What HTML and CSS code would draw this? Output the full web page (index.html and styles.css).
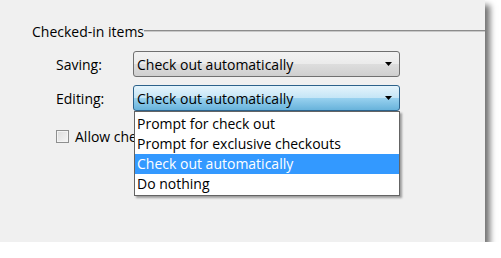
FILE: index.html
```html
<!DOCTYPE html>
<html lang="en">
<head>
  <meta charset="UTF-8">
  <title>Options - Checked-in items</title>
  <link rel="stylesheet" href="styles.css">
</head>
<body>
  <div class="window">
    <div class="group">
      <div class="group-head">
        <span class="group-title">Checked-in items</span>
        <span class="group-line"></span>
      </div>

      <div class="row">
        <span class="row-label">Saving:</span>
        <div class="combo">
          <span class="combo-text">Check out automatically</span>
          <svg class="combo-arrow" width="7" height="4" viewBox="0 0 7 4"><path d="M0 0H7L3.5 4Z" fill="#000"/></svg>
        </div>
      </div>

      <div class="row">
        <span class="row-label">Editing:</span>
        <div class="combo combo-open">
          <span class="combo-text">Check out automatically</span>
          <svg class="combo-arrow" width="7" height="4" viewBox="0 0 7 4"><path d="M0 0H7L3.5 4Z" fill="#000"/></svg>
          <ul class="combo-list">
            <li>Prompt for check out</li>
            <li>Prompt for exclusive checkouts</li>
            <li class="selected">Check out automatically</li>
            <li>Do nothing</li>
          </ul>
        </div>
      </div>

      <label class="check-row">
        <span class="checkbox"></span>
        <span class="check-text">Allow checked-in items to be edited</span>
      </label>
    </div>
  </div>
</body>
</html>
```

FILE: styles.css
```css
body {
  margin: 0;
  background-color: #FFFFFF;
  font-family: "Open Sans", "Noto Sans", sans-serif;
  font-size: 14px;
  color: #000000;
}

.window {
  width: 485px;
  height: 242px;
  background-color: #F0F0F0;
  box-shadow: 5px 5px 6px rgba(0, 0, 0, 0.55);
}

.group {
  padding: 22px 0 0 32px;
}

.group-head {
  display: flex;
  align-items: center;
  height: 18px;
}

.group-line {
  flex: 1;
  height: 0;
  border-top: 1px solid #8C8C8C;
  border-bottom: 1px solid #C8C8C8;
}

.row {
  display: flex;
  align-items: center;
  margin-top: 8px;
  padding-left: 24px;
}

.group-head + .row {
  margin-top: 11px;
}

.row-label {
  width: 77px;
}

.combo {
  position: relative;
  width: 267px;
  height: 26px;
  box-sizing: border-box;
  border: 1px solid #707070;
  border-radius: 3px;
  background: linear-gradient(#F2F2F2, #EBEBEB 50%, #DDDDDD 51%, #CFCFCF);
  display: flex;
  align-items: center;
  justify-content: space-between;
  padding: 0 7px 0 3px;
}

.combo-open {
  border-color: #2C628B;
  background: linear-gradient(#E5F4FC, #C4E5F6 50%, #98D1EF 51%, #68B3DB);
}

.combo-arrow {
  display: block;
}

.combo-list {
  position: absolute;
  z-index: 1;
  left: 0;
  top: 25px;
  width: 266px;
  box-sizing: border-box;
  margin: 0;
  padding: 2px 0 1px;
  list-style: none;
  background-color: #FFFFFF;
  border: 1px solid #646464;
  box-shadow: 2px 2px 2px rgba(0, 0, 0, 0.35);
}

.combo-list li {
  height: 20px;
  line-height: 20px;
  padding-left: 2px;
}

.combo-list .selected {
  background-color: #3399FF;
  color: #FFFFFF;
}

.check-row {
  display: flex;
  align-items: center;
  gap: 6px;
  height: 14px;
  margin-top: 18px;
  padding-left: 24px;
}

.check-text {
  white-space: nowrap;
}

.checkbox {
  width: 13px;
  height: 13px;
  box-sizing: border-box;
  border: 1px solid #8E8F8F;
  background: linear-gradient(135deg, #DCDCDC, #F6F6F6);
  box-shadow: inset 0 0 0 1px #F4F4F4;
}
```
